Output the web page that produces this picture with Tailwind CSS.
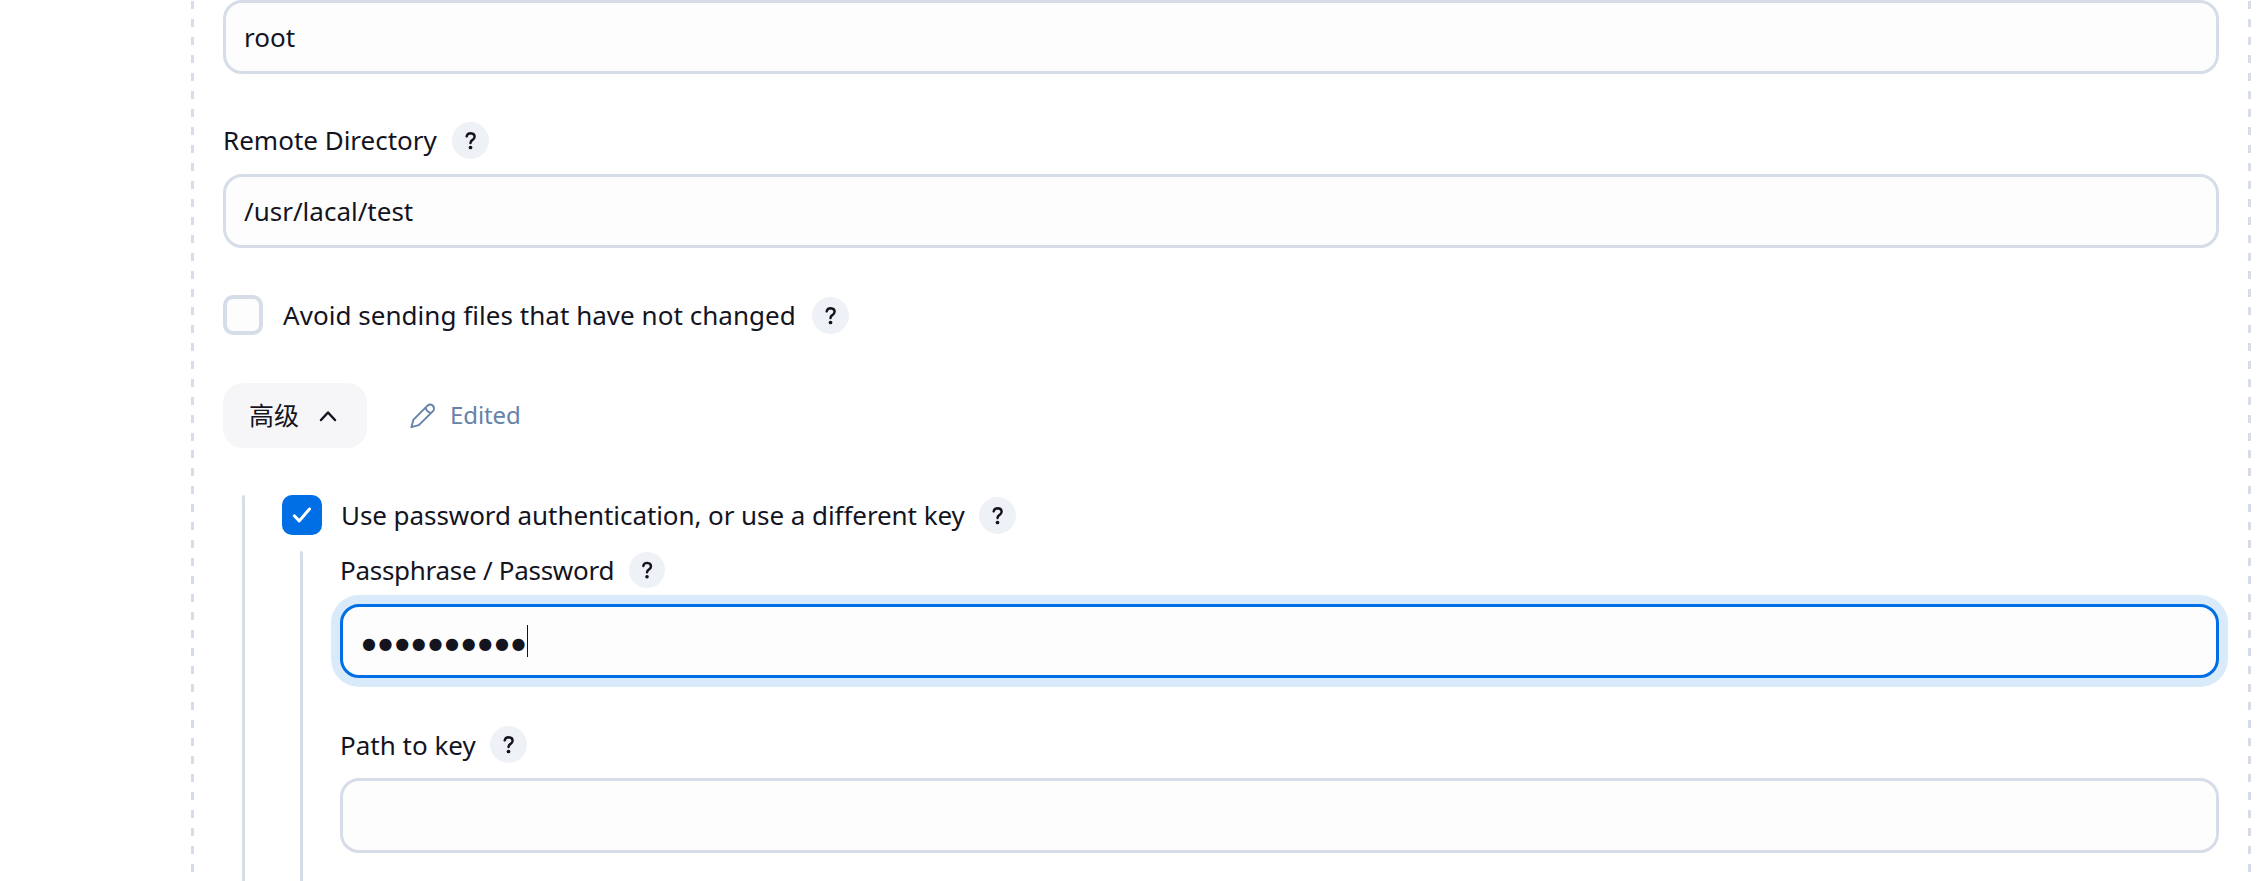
<!DOCTYPE html>
<html lang="en">
<head>
<meta charset="utf-8">
<title>Transfer settings</title>
<script src="https://cdn.jsdelivr.net/npm/@tailwindcss/browser@4"></script>
</head>
<body class="bg-white font-['Noto_Sans','Noto_Sans_CJK_SC',sans-serif] text-[26px] text-[#14141f] leading-9">
<svg class="hidden">
  <symbol id="help" viewBox="0 0 36 36"><path d="M14.3 14Q14.8 10.9 18.2 10.9Q22 11.1 22 14.4Q21.9 16.2 20 17.4Q18.1 18.5 18 20.4" fill="none" stroke="#14141f" stroke-width="2.4" stroke-linecap="round" stroke-linejoin="round"/><circle cx="18" cy="24.8" r="1.8" fill="#14141f"/></symbol>
</svg>
<main class="flex h-[881px] overflow-hidden pl-[191px]">
  <div class="h-[873px] w-[3px] shrink-0 bg-[repeating-linear-gradient(to_bottom,transparent_0_1px,#d6dde8_1px_9px,transparent_9px_17.98px)]"></div>
  <div class="ml-[29px] flex w-[1996px] shrink-0 flex-col">
    <div class="flex h-[74px] shrink-0 items-center rounded-[19px] border-3 border-[#d6dde8] bg-[#fdfdfd] pl-[18px]">root</div>
    <div class="mt-12 flex h-9 shrink-0 items-center gap-[15px]"><span>Remote Directory</span><span class="size-[37px] rounded-full bg-[#eef1f5]"><svg class="size-[37px]"><use href="#help"/></svg></span></div>
    <div class="mt-4 flex h-[74px] shrink-0 items-center rounded-[19px] border-3 border-[#d6dde8] bg-[#fdfdfd] pl-[18px]">/usr/lacal/test</div>
    <div class="mt-[47px] flex h-10 shrink-0 items-center"><span class="size-10 rounded-[10px] border-4 border-[#d6dde8] bg-[#fdfdfd]"></span><span class="ml-5 tracking-[0.04px]">Avoid sending files that have not changed</span><span class="ml-4 size-[37px] rounded-full bg-[#eef1f5]"><svg class="size-[37px]"><use href="#help"/></svg></span></div>
    <div class="mt-12 flex h-[65px] shrink-0 items-center">
      <span class="flex h-[65px] w-36 items-center rounded-[20px] bg-[#f6f6f9] pl-[26px] text-[25px]"><span class="-mt-px">高级</span><svg class="ml-[19px] size-5" viewBox="0 0 20 20" fill="none" stroke="#14141f" stroke-width="2.5" stroke-linecap="round" stroke-linejoin="round"><path d="M3 14L10 6.5L17 14"/></svg></span>
      <svg class="ml-[42px] size-7" viewBox="0 0 28 28" fill="none" stroke="#6582a9" stroke-width="1.9" stroke-linecap="round" stroke-linejoin="round"><path d="M2.4 25.2L4.3 17.9L18.5 3.7Q20.8 1.5 23.9 3.6Q26.1 6.6 24 9.1L9.8 23.2ZM16.7 5.7Q17.5 10 22.1 11"/></svg>
      <span class="-mt-0.5 ml-[13px] text-2xl tracking-[-0.1px] text-[#6582a9]">Edited</span>
    </div>
    <div class="mt-[47px] ml-[19px] flex h-[386px] shrink-0">
      <div class="w-[3px] shrink-0 rounded-t-full bg-[#d6dde8]"></div>
      <div class="ml-[37px] flex w-[1937px] flex-col">
        <div class="flex h-10 shrink-0 items-center"><span class="flex size-10 items-center justify-center rounded-[10px] bg-[#006fe6]"><svg class="size-10" viewBox="0 0 40 40" fill="none" stroke="#fff" stroke-width="3" stroke-linecap="round" stroke-linejoin="round"><path d="M12.3 20.8L17.2 25.9L27.5 14"/></svg></span><span class="ml-[19px] tracking-[-0.07px]">Use password authentication, or use a different key</span><span class="ml-[14px] size-[37px] rounded-full bg-[#eef1f5]"><svg class="size-[37px]"><use href="#help"/></svg></span></div>
        <div class="mt-4 ml-[18px] flex h-[330px] shrink-0">
          <div class="w-[3px] shrink-0 rounded-t-full bg-[#d6dde8]"></div>
          <div class="ml-[37px] flex w-[1879px] shrink-0 flex-col">
            <div class="mt-px flex h-9 shrink-0 items-center"><span class="tracking-[-0.28px]">Passphrase / Password</span><span class="ml-[15px] size-9 rounded-full bg-[#eef1f5]"><svg class="size-9"><use href="#help"/></svg></span></div>
            <div class="mt-4 flex h-[74px] shrink-0 items-center rounded-[19px] border-3 border-[#006fe6] bg-[#fdfdfd] pl-[19px] ring-9 ring-[#d9eafb]"><span class="pt-[5px] font-['DejaVu_Sans'] text-[16px] tracking-[2.65px]">●●●●●●●●●●</span><span class="-ml-px h-8 w-px bg-[#14141f]"></span></div>
            <div class="mt-12 flex h-9 shrink-0 items-center"><span class="pt-px">Path to key</span><span class="ml-[14px] size-[37px] rounded-full bg-[#eef1f5]"><svg class="size-[37px]"><use href="#help"/></svg></span></div>
            <div class="mt-4 h-[75px] shrink-0 rounded-[19px] border-3 border-[#d6dde8] bg-[#fdfdfd]"></div>
          </div>
        </div>
      </div>
    </div>
  </div>
  <div class="ml-[29px] h-[873px] w-[3px] shrink-0 bg-[repeating-linear-gradient(to_bottom,transparent_0_1px,#d6dde8_1px_9px,transparent_9px_17.98px)]"></div>
</main>
</body>
</html>
